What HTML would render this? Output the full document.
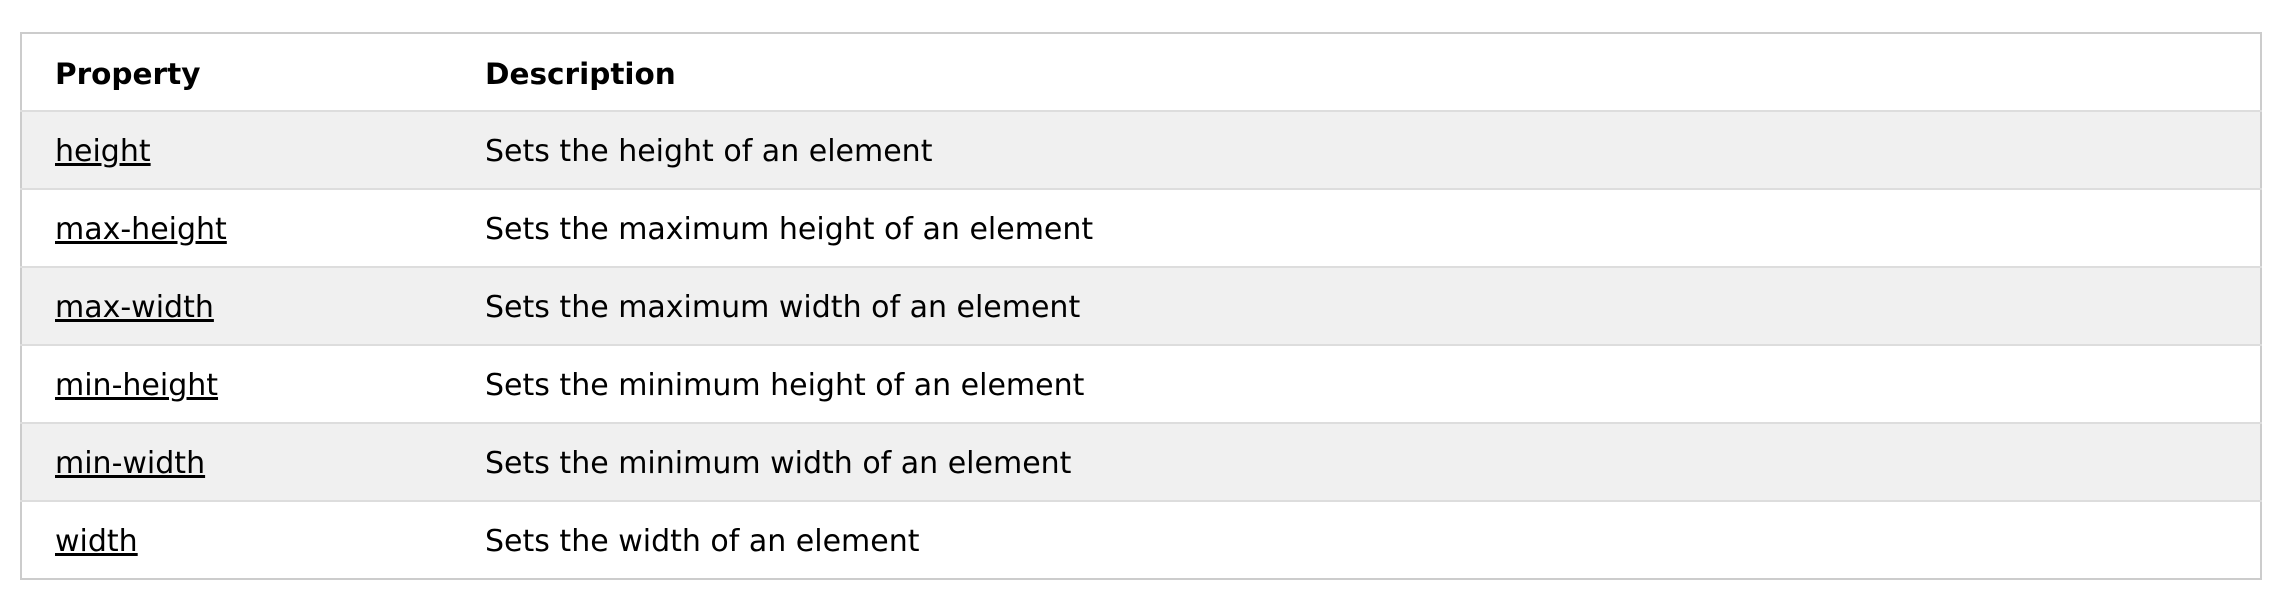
<!DOCTYPE html>
<html><head><style>
html,body{margin:0;padding:0;background:#fff;width:2286px;height:614px;overflow:hidden}
table{position:absolute;left:20px;top:32px;width:2242px;border-collapse:collapse;border:2px solid #ccc;font-family:"DejaVu Sans","Liberation Sans",sans-serif;font-size:30px;color:#000}
tr{height:78px}
tr+tr{border-top:2px solid #ddd}
tr:nth-child(even){background:#f0f0f0}
td,th{padding:3px 0 0 33px;text-align:left;vertical-align:middle}
th{font-weight:bold;font-size:29.5px}
td:first-child,th:first-child{width:397px}
a{color:#000;text-decoration:underline}
</style></head><body>
<table>
<tr style="height:78px"><th>Property</th><th>Description</th></tr>
<tr><td><a>height</a></td><td>Sets the height of an element</td></tr>
<tr><td><a>max-height</a></td><td>Sets the maximum height of an element</td></tr>
<tr><td><a>max-width</a></td><td>Sets the maximum width of an element</td></tr>
<tr><td><a>min-height</a></td><td>Sets the minimum height of an element</td></tr>
<tr><td><a>min-width</a></td><td>Sets the minimum width of an element</td></tr>
<tr><td><a>width</a></td><td>Sets the width of an element</td></tr>
</table>
</body></html>
